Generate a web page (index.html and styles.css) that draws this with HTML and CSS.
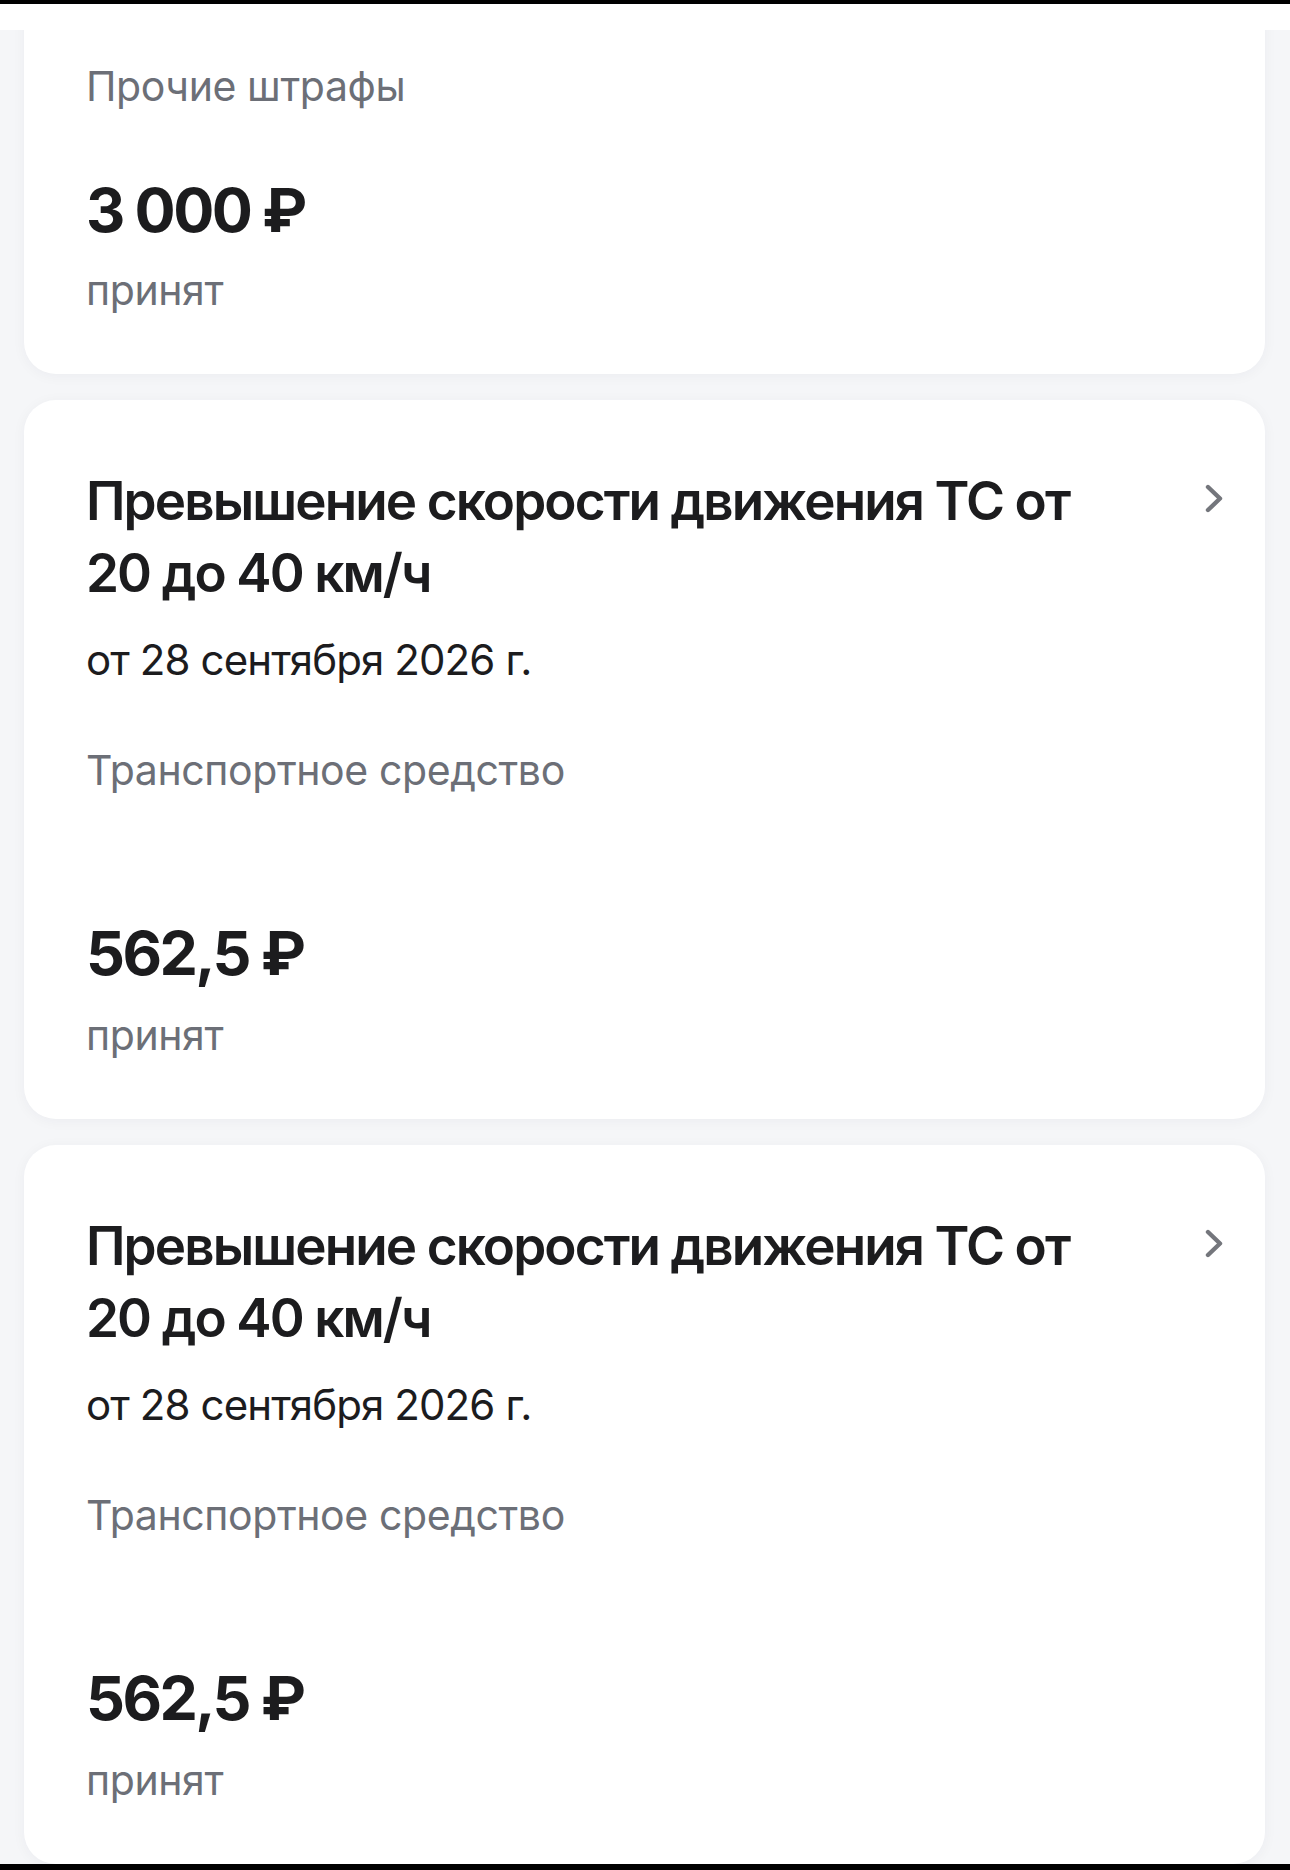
FILE: index.html
```html
<!DOCTYPE html>
<html lang="ru">
<head>
<meta charset="utf-8">
<title>Штрафы</title>
<link rel="stylesheet" href="styles.css">
</head>
<body>
<div class="status-edge"></div>
<div class="screen">
  <div class="header-strip"></div>
  <div class="list">
    <section class="card card-first">
      <div class="category">Прочие штрафы</div>
      <div class="amount">3 000 ₽</div>
      <div class="status">принят</div>
    </section>

    <section class="card">
      <div class="card-head">
        <h2 class="title">Превышение скорости движения ТС от 20 до 40 км/ч</h2>
        <svg class="chevron" viewBox="0 0 18 29" width="18" height="29" aria-hidden="true">
          <polyline points="3,3 15,14.5 3,26" fill="none" stroke="currentColor" stroke-width="4.4" stroke-linecap="round" stroke-linejoin="round"/>
        </svg>
      </div>
      <div class="date">от 28 сентября 2026 г.</div>
      <div class="vehicle">Транспортное средство</div>
      <div class="amount">562,5 ₽</div>
      <div class="status">принят</div>
    </section>

    <section class="card">
      <div class="card-head">
        <h2 class="title">Превышение скорости движения ТС от 20 до 40 км/ч</h2>
        <svg class="chevron" viewBox="0 0 18 29" width="18" height="29" aria-hidden="true">
          <polyline points="3,3 15,14.5 3,26" fill="none" stroke="currentColor" stroke-width="4.4" stroke-linecap="round" stroke-linejoin="round"/>
        </svg>
      </div>
      <div class="date">от 28 сентября 2026 г.</div>
      <div class="vehicle">Транспортное средство</div>
      <div class="amount">562,5 ₽</div>
      <div class="status">принят</div>
    </section>
  </div>
</div>
<div class="bottom-edge"></div>
</body>
</html>
```
FILE: styles.css
```css
html, body {
  margin: 0;
  padding: 0;
}
body {
  background: #f5f6f8;
  font-family: Inter, "Noto Sans", "Liberation Sans", sans-serif;
  color: #1c1c1e;
  width: 1290px;
  height: 1870px;
  overflow: hidden;
}
.status-edge {
  height: 4px;
  background: #000;
}
.screen {
  position: relative;
}
.header-strip {
  position: absolute;
  left: 0;
  right: 0;
  top: 0;
  height: 26px;
  background: #fff;
  z-index: 2;
}
.list {
  display: flex;
  flex-direction: column;
  gap: 26px;
  padding: 0 25px 0 24px;
}
.card {
  background: #fff;
  border-radius: 32px;
  box-shadow: 0 2px 14px rgba(20, 30, 60, 0.045);
  padding: 65px 42px 58px 62px;
}
.card-first {
  border-radius: 0 0 32px 32px;
  padding-top: 56px;
}
.card-head {
  display: flex;
  align-items: flex-start;
  gap: 96px;
}
.title {
  flex: 1;
  margin: 0;
  font-size: 53px;
  line-height: 72px;
  font-weight: 600;
  letter-spacing: -1.9px;
  color: #1c1c1e;
}
.chevron {
  flex: none;
  margin-top: 19px;
  color: #74767c;
}
.category,
.vehicle,
.status {
  font-size: 41px;
  line-height: 52px;
  color: #6c6f77;
  letter-spacing: -0.4px;
}
.date {
  margin-top: 25px;
  font-size: 42px;
  line-height: 52px;
  color: #1c1c1e;
  letter-spacing: -0.9px;
}
.vehicle {
  margin-top: 58px;
  min-height: 104px;
}
.amount {
  margin-top: 67px;
  font-size: 61px;
  line-height: 76px;
  font-weight: 700;
  letter-spacing: -2.6px;
  color: #1c1c1e;
}
.card-first .amount {
  margin-top: 60px;
}
.status {
  margin-top: 18px;
}
.card-first .status {
  margin-top: 16px;
}
.bottom-edge {
  position: fixed;
  left: 0;
  right: 0;
  bottom: 0;
  height: 6px;
  background: #000;
  z-index: 3;
}
```
